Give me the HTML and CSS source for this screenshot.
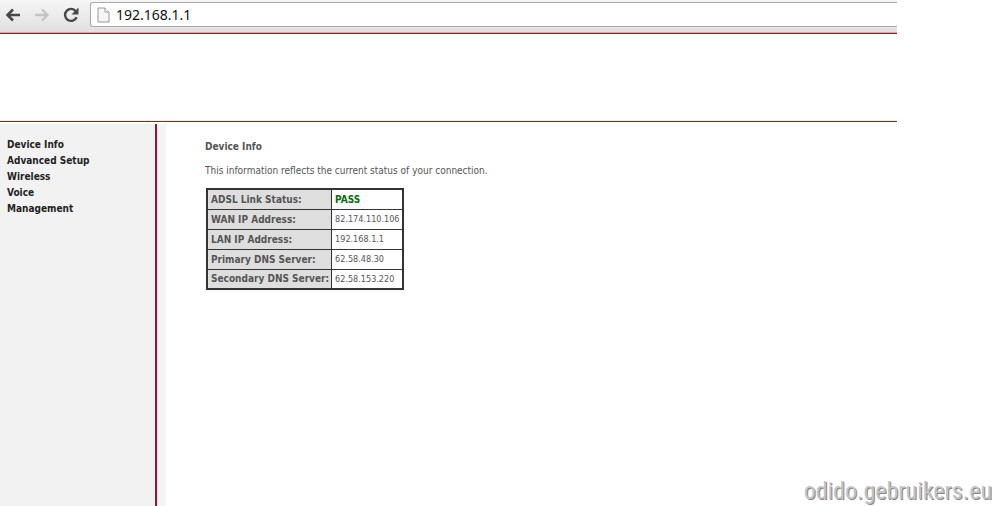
FILE: index.html
```
<!DOCTYPE html>
<html lang="en">

<head>
  <meta charset="UTF-8">
  <meta name="viewport" content="width=device-width, initial-scale=1.0">
  <title>Device Info</title>
  <link rel="stylesheet" href="styles.css">
</head>

<body>
  <div class="browser">
    <div class="toolbar">
      <button type="button" class="nav-button" aria-label="Back">
        <svg width="16" height="14" viewBox="0 0 16 14"><path d="M15 7H3M8 1.5L2.5 7L8 12.5" fill="none" stroke="#484848" stroke-width="2.6"/></svg>
      </button>
      <button type="button" class="nav-button" aria-label="Forward" disabled>
        <svg width="16" height="14" viewBox="0 0 16 14"><path d="M1 7H13M8 1.5L13.5 7L8 12.5" fill="none" stroke="#c4c4c4" stroke-width="2.4"/></svg>
      </button>
      <button type="button" class="nav-button" aria-label="Reload">
        <svg width="16" height="16" viewBox="0 0 16 16"><path d="M12.8 4.2A6 6 0 1 0 13.6 10.2" fill="none" stroke="#484848" stroke-width="2.4"/><path d="M15.5 0.5V7.5H8.5Z" fill="#484848"/></svg>
      </button>
      <div class="address">
        <svg width="13" height="16" viewBox="0 0 13 16"><path d="M1 1H8L12 5V15H1Z" fill="#f6f6f6" stroke="#999"/><path d="M8 1V5H12" fill="#fff" stroke="#999"/></svg>
        <input type="text" value="192.168.1.1" aria-label="Address">
      </div>
    </div>

    <header class="banner"></header>

    <div class="page">
      <nav class="menu">
        <a href="#">Device Info</a>
        <a href="#">Advanced Setup</a>
        <a href="#">Wireless</a>
        <a href="#">Voice</a>
        <a href="#">Management</a>
      </nav>

      <main class="content">
        <h1>Device Info</h1>
        <p>This information reflects the current status of your connection.</p>
        <table>
          <tr><th scope="row">ADSL Link Status:</th><td class="pass">PASS</td></tr>
          <tr><th scope="row">WAN IP Address:</th><td>82.174.110.106</td></tr>
          <tr><th scope="row">LAN IP Address:</th><td>192.168.1.1</td></tr>
          <tr><th scope="row">Primary DNS Server:</th><td>62.58.48.30</td></tr>
          <tr><th scope="row">Secondary DNS Server:</th><td>62.58.153.220</td></tr>
        </table>
      </main>
    </div>
  </div>

  <div class="watermark">odido.gebruikers.eu</div>
</body>

</html>
```

FILE: styles.css
```
* {
  box-sizing: border-box;
}

body {
  margin: 0;
  background: #fff;
  font-family: "DejaVu Sans Condensed", "DejaVu Sans", sans-serif;
  font-size: 10px;
  color: #555;
}

.browser {
  display: flex;
  flex-direction: column;
  min-height: 100vh;
  margin-right: 107px;
}

.toolbar {
  display: flex;
  align-items: flex-start;
  height: 34px;
  padding: 2px 0 0 5px;
  background: linear-gradient(#f6f6f6, #dfdfdf);
  border-bottom: 1px solid #8a1c2c;
  box-shadow: inset 0 -1px #eba0a6;
}

.nav-button {
  display: flex;
  align-items: center;
  width: 29px;
  height: 25px;
  padding: 0;
  border: 0;
  background: none;
}

.address {
  flex: 1;
  display: flex;
  align-items: center;
  gap: 6px;
  height: 25px;
  margin-left: -2px;
  padding-left: 6px;
  background: #fff;
  border: 1px solid #aaa;
  border-right: 0;
  border-radius: 3px 0 0 3px;
}

.address input {
  flex: 1;
  min-width: 0;
  padding: 0;
  border: 0;
  outline: 0;
  background: none;
  font-family: "Noto Sans", sans-serif;
  font-size: 14px;
  color: #111;
}

.banner {
  height: 88px;
  border-bottom: 1px solid #982020;
  box-shadow: inset 0 -1px #fde8e8;
}

.page {
  flex: 1;
  display: flex;
  margin-top: 2px;
}

.menu {
  display: flex;
  flex-direction: column;
  width: 157px;
  padding: 13px 7px;
  background: #f2f2f2;
  border-right: 2px solid #8c1638;
}

.menu a {
  line-height: 16px;
  font-weight: bold;
  color: #222;
  text-decoration: none;
}

.content {
  flex: 1;
  padding: 15px 0 0 39px;
  border-left: 9px solid #f4f4f4;
}

h1 {
  margin: 0 0 8px;
  font-size: 10px;
  line-height: 16px;
}

p {
  margin: 0 0 9px;
  line-height: 16px;
}

table {
  margin-left: 1px;
  border-collapse: collapse;
  border: 2px solid #333;
}

th,
td {
  height: 20px;
  padding: 0 3px;
  border: 1px solid #333;
  text-align: left;
}

th {
  padding-right: 2px;
  background: #dedede;
}

td {
  font-size: 9px;
}

.pass {
  font-size: 10px;
  font-weight: bold;
  color: #0a6e0a;
}

/* site name laid over the corner of the page */
.watermark {
  position: absolute;
  right: 12px;
  bottom: 1px;
  font-family: "Roboto Condensed", Roboto, sans-serif;
  font-size: 24px;
  line-height: 28px;
  color: #c4c4c4;
  text-shadow: 1px 1px #888;
}
```
